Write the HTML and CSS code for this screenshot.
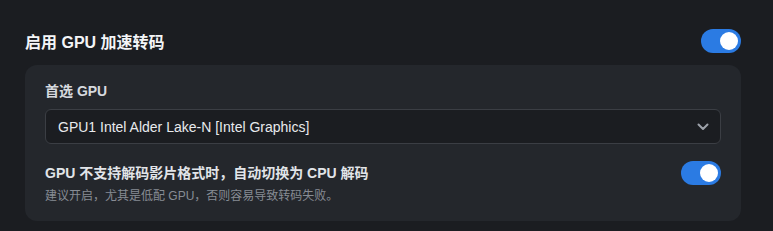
FILE: index.html
```html
<!DOCTYPE html>
<html lang="zh-CN">
<head>
<meta charset="utf-8">
<link rel="stylesheet" href="styles.css">
</head>
<body>
<div class="page">
  <div class="header">
    <div class="title">启用 GPU 加速转码</div>
    <div class="toggle on"><span class="knob"></span></div>
  </div>
  <div class="card">
    <div class="label">首选 GPU</div>
    <div class="select">
      <span class="select-text">GPU1 Intel Alder Lake-N [Intel Graphics]</span>
      <svg class="chevron" width="12" height="8" viewBox="0 0 12 8"><path d="M1.5 1.5 L6 6 L10.5 1.5" fill="none" stroke="#9da2aa" stroke-width="2" stroke-linecap="round" stroke-linejoin="round"/></svg>
    </div>
    <div class="row">
      <div class="row-text">
        <div class="row-title">GPU 不支持解码影片格式时，自动切换为 CPU 解码</div>
        <div class="row-sub">建议开启，尤其是低配 GPU，否则容易导致转码失败。</div>
      </div>
      <div class="toggle on"><span class="knob"></span></div>
    </div>
  </div>
</div>
</body>
</html>
```

FILE: styles.css
```css
html, body {
  margin: 0;
  padding: 0;
  background: #1b1d21;
  font-family: "Liberation Sans", "Noto Sans CJK SC", sans-serif;
}
.page {
  padding: 29px 32px 0 25px;
}
.header {
  display: flex;
  align-items: center;
  justify-content: space-between;
  height: 24px;
}
.title {
  color: #f4f5f7;
  font-size: 16px;
  font-weight: 700;
}
.toggle {
  width: 40px;
  height: 24px;
  border-radius: 12px;
  background: #2b7be3;
  display: flex;
  align-items: center;
  justify-content: flex-end;
  padding: 0 3px;
  box-sizing: border-box;
  flex-shrink: 0;
}
.knob {
  width: 18px;
  height: 18px;
  border-radius: 50%;
  background: #ffffff;
}
.card {
  margin-top: 12px;
  background: #24272c;
  border-radius: 12px;
  padding: 17px 20px 16px 20px;
}
.label {
  color: #d6d9de;
  font-size: 14px;
  font-weight: 600;
  line-height: 18px;
}
.select {
  margin-top: 9px;
  height: 35px;
  box-sizing: border-box;
  border: 1px solid #3b3e44;
  border-radius: 6px;
  background: #1b1d21;
  display: flex;
  align-items: center;
  justify-content: space-between;
  padding: 0 11px 0 12px;
}
.select-text {
  color: #e8eaed;
  font-size: 14px;
}
.chevron {
  display: block;
}
.row {
  margin-top: 17px;
  display: flex;
  justify-content: space-between;
  align-items: flex-start;
}
.row-title {
  color: #e1e4e8;
  font-size: 14px;
  font-weight: 700;
  line-height: 24px;
}
.row-sub {
  margin-top: 2px;
  color: #878c94;
  font-size: 12px;
  line-height: 18px;
}
```
